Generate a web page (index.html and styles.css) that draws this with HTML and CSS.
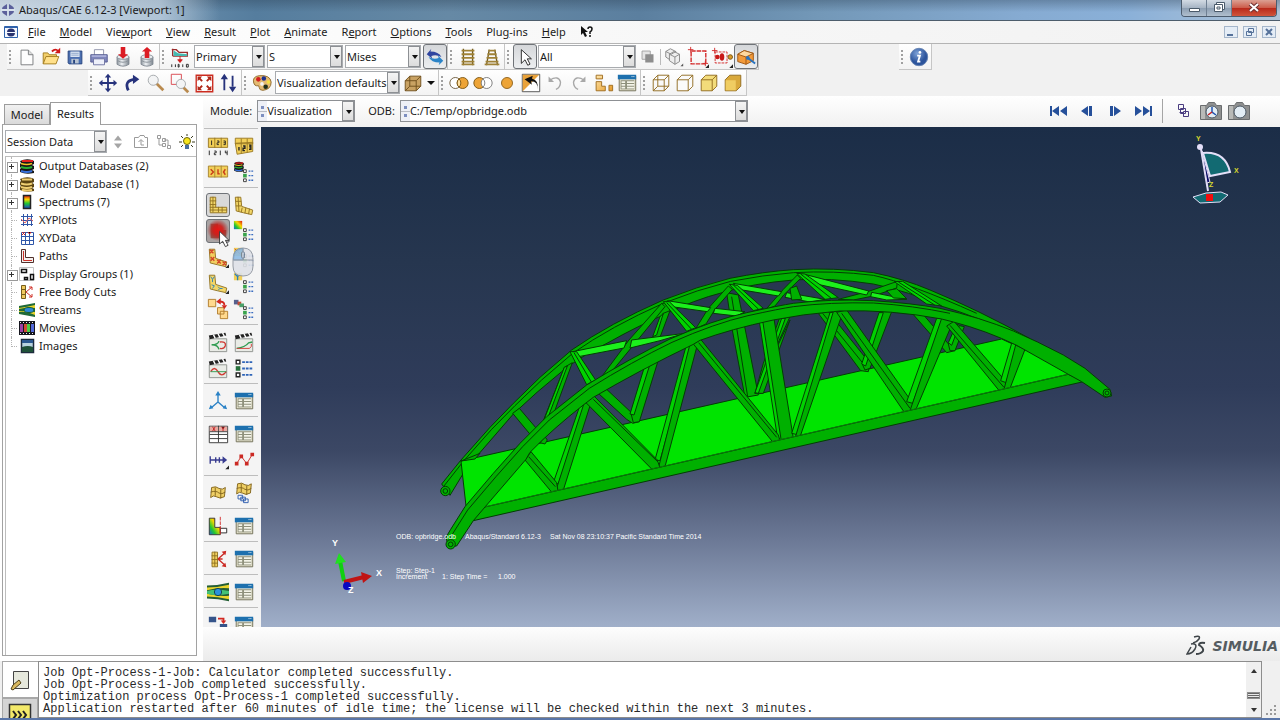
FILE: index.html
```html
<!DOCTYPE html>
<html lang="en">
<head>
<meta charset="utf-8">
<title>Abaqus/CAE 6.12-3 [Viewport: 1]</title>
<link rel="stylesheet" href="styles.css">
</head>
<body>
<svg class="sprite" aria-hidden="true">
  <defs>
    <linearGradient id="rainbow" x1="0" y1="0" x2="0" y2="1"><stop offset="0" stop-color="#e01010"/><stop offset=".3" stop-color="#f8d800"/><stop offset=".6" stop-color="#20c830"/><stop offset="1" stop-color="#1840d0"/></linearGradient>
    <linearGradient id="rainbowx" x1="1" y1="0" x2="0" y2="1"><stop offset="0" stop-color="#e01010"/><stop offset=".4" stop-color="#f8d800"/><stop offset=".7" stop-color="#20c830"/><stop offset="1" stop-color="#1860e0"/></linearGradient>
    <linearGradient id="gold" x1="0" y1="0" x2="1" y2="1"><stop offset="0" stop-color="#ffe7ae"/><stop offset="1" stop-color="#e59a28"/></linearGradient>
    <radialGradient id="hot"><stop offset="0" stop-color="#e81414"/><stop offset=".45" stop-color="#d01c18" stop-opacity=".9"/><stop offset="1" stop-color="#a02020" stop-opacity="0"/></radialGradient>
    <radialGradient id="infog" cx=".4" cy=".3"><stop offset="0" stop-color="#7fa3d8"/><stop offset="1" stop-color="#2c549c"/></radialGradient>
    <linearGradient id="steel" x1="0" x2="1"><stop offset="0" stop-color="#8c959d"/><stop offset=".4" stop-color="#eef1f4"/><stop offset="1" stop-color="#7c858e"/></linearGradient>
  </defs>
  <symbol id="new" viewBox="0 0 24 24"><path d="M5.500 4.500h8l5 5v11h-13z" fill="#fdfdfd" stroke="#77797c"/><path d="M13.500 4.500v5h5" fill="#ddd" stroke="#77797c"/></symbol>
  <symbol id="open" viewBox="0 0 24 24"><path d="M3.500 19.500V7.500h5l1.500 2h8v4" fill="#f2cf6a" stroke="#a17a1c"/><path d="M3.500 19.500l3-8h14l-3 8z" fill="#ffe08a" stroke="#a17a1c"/><path d="M13 6q4-4 7 0" fill="none" stroke="#d01818" stroke-width="2"/><path d="M22 2v6h-6z" fill="#d01818"/></symbol>
  <symbol id="save" viewBox="0 0 24 24"><path d="M4.500 5.500h15v14h-14l-1-1z" fill="#4b6fb0" stroke="#26447e"/><path d="M7 6h10v6H7z" fill="#d9e4f2"/><path d="M8 8h8M8 10h8" stroke="#8fa6c9"/><path d="M8 14h8v5H8z" fill="#b9c4d2"/><path d="M10 15h2v4h-2z" fill="#26447e"/></symbol>
  <symbol id="print" viewBox="0 0 24 24"><path d="M7 4h10v6H7z" fill="#fff" stroke="#8d91a8"/><path d="M3 9.500h18v8H3z" fill="#7f86bd" stroke="#545b92"/><path d="M4 10h16v2H4z" fill="#a9aed8"/><path d="M6 14h12v6.500H6z" fill="#eef0fa" stroke="#6d73a2"/></symbol>
  <symbol id="drum" viewBox="0 0 24 24"><path d="M5.500 12v8q6.500 4 13 0v-8z" fill="url(#steel)" stroke="#7f8790"/><ellipse cx="12" cy="12" rx="6.500" ry="2.500" fill="#e8ebee" stroke="#8a9299"/><path d="M6 16q6 3.500 12 0" fill="none" stroke="#8a9299"/></symbol>
  <symbol id="dbdown" viewBox="0 0 24 24"><use href="#drum"/><path d="M9.500 1h5v8h3L12 14 6.500 9h3z" fill="#dc1c24"/></symbol>
  <symbol id="dbup" viewBox="0 0 24 24"><use href="#drum"/><path d="M9.500 13h5V6h3L12 1 6.500 6h3z" fill="#dc1c24"/></symbol>
  <symbol id="field" viewBox="0 0 24 24"><path d="M4 3v8M3 4h5l3 3h9v4H4" fill="none" stroke="#9b2c2c" stroke-width="1.500"/><path d="M5 5l5 3 10 1v2H5z" fill="#46b9b0"/><path d="M12 11v6M9.500 15l2.500 3 2.500-3z" stroke="#d01c1c" fill="#d01c1c"/><path d="M3 20v3M7 20v3M15 20v3M11 20v3h-1v-3zM19 20v3h2v-3z" stroke="#222" fill="none"/></symbol>
  <symbol id="sync" viewBox="0 0 24 24"><path d="M8 3l-1 3q9 0 12 6-6-3-11-1l1 3-6-5z" fill="#2f45a0"/><path d="M16 21l1-3q-9 0-12-6 6 3 11 1l-1-3 6 6z" fill="#2b84c8"/></symbol>
  <symbol id="ladder" viewBox="0 0 24 24"><path d="M7 3v18M17 3v18" stroke="#6f5a20" stroke-width="1.500"/><path d="M5 5h14M5 9h14M5 13h14M5 17h14M5 20h14" stroke="#a08236" stroke-width="2"/></symbol>
  <symbol id="persp" viewBox="0 0 24 24"><path d="M9 4L6 21M15 4l3 17" stroke="#6f5a20" stroke-width="1.500"/><path d="M8 5h8M7 9h10M6 13h12M5 17h14M4 20h16" stroke="#a08236" stroke-width="2"/></symbol>
  <symbol id="arrow" viewBox="0 0 24 24"><path d="M8 4v15l4-4 3 6 2.500-1.200-3-5.800H19z" fill="#fff" stroke="#222"/></symbol>
  <symbol id="overlap" viewBox="0 0 24 24"><path d="M5.500 5.500h9v9h-9z" fill="#e4e4e4" stroke="#a0a0a0"/><path d="M9 9h9v9H9z" fill="#8d8d8d"/></symbol>
  <symbol id="boxes" viewBox="0 0 24 24"><g fill="#eee" stroke="#858585"><path d="M3 6l5-3 6 3v7l-5 3-6-4z"/><path d="M7 9l5-3 6 3v8l-5 3-6-4z"/><path d="M7 9l6 3 5-3M13 12v8M3 6l6 3 5-3" fill="none"/></g><path d="M22 19v3h-3z" fill="#555"/></symbol>
  <symbol id="rect" viewBox="0 0 24 24"><path d="M4.500 5.500h16v14h-16z" fill="none" stroke="#d32a2a" stroke-width="1.500" stroke-dasharray="5 1"/><path d="M1 4h6M4 1v6M17 19h6M20 16v6" stroke="#d32a2a"/><path d="M24 20v4h-4z" fill="#222"/></symbol>
  <symbol id="nodes" viewBox="0 0 24 24"><path d="M4.500 6.500h13v12h-13z" fill="none" stroke="#d32a2a" stroke-dasharray="3 1"/><path d="M1 5h6M4 2v6" stroke="#d32a2a"/><circle cx="7" cy="12" r="2.500" fill="#c81818"/><ellipse cx="12" cy="12" rx="2.500" ry="4" fill="#c81818"/><circle cx="21" cy="12" r="2.500" fill="#d99a28" stroke="#7a5412"/><path d="M24 20v4h-4z" fill="#222"/></symbol>
  <symbol id="orangebox" viewBox="0 0 24 24"><path d="M3 9l7-4 10 3v8l-8 4-9-3z" fill="#f29a3a" stroke="#9c5410"/><path d="M3 9l9 3 8-4-10-3z" fill="#ffd9a0" stroke="#9c5410"/><path d="M12 12v8" stroke="#9c5410"/><path d="M14 13l8 6" stroke="#2672c0" stroke-width="2"/><circle cx="14" cy="13" r="2" fill="#2672c0"/></symbol>
  <symbol id="move" viewBox="0 0 24 24"><path d="M12 5v14M5 12h14" stroke="#27337c" stroke-width="2"/><path d="M12 2l3.500 4h-7zM12 22l3.500-4h-7zM2 12l4-3.500v7zM22 12l-4-3.500v7z" fill="#27337c"/></symbol>
  <symbol id="rotate" viewBox="0 0 24 24"><path d="M8 20Q3 10 14 8" fill="none" stroke="#27337c" stroke-width="3"/><path d="M13 3l7 5-7 5z" fill="#27337c"/></symbol>
  <symbol id="zoom" viewBox="0 0 24 24"><path d="M12 12l8 8" stroke="#b98a4e" stroke-width="3"/><circle cx="9" cy="9" r="5.500" fill="#f3f4f5" stroke="#a2a6aa"/></symbol>
  <symbol id="zoombox" viewBox="0 0 24 24"><path d="M2.500 2.500h11v11h-11z" fill="none" stroke="#d8434a"/><path d="M15 16l6 6" stroke="#b98a4e" stroke-width="3"/><circle cx="13" cy="13" r="5" fill="#f3f4f5" stroke="#a2a6aa"/></symbol>
  <symbol id="fit" viewBox="0 0 24 24"><path d="M3.500 3.500h18v18h-18z" fill="#fff" stroke="#cc2c20" stroke-width="1.500"/><path d="M5 5h5L5 10zM20 5v5l-5-5zM5 20v-5l5 5zM20 20h-5l5-5z" fill="#b02818"/><path d="M6 6l4 4M19 6l-4 4M6 19l4-4M19 19l-4-4" stroke="#b02818" stroke-width="2"/></symbol>
  <symbol id="updown" viewBox="0 0 24 24"><path d="M8 7v13M17 4v12" stroke="#27337c" stroke-width="2"/><path d="M8 2l4 6H4zM17 22l4-6h-8z" fill="#27337c"/></symbol>
  <symbol id="palette" viewBox="0 0 24 24"><path d="M3 12Q1 5 9 4q12-1 13 7 0 8-9 9-4 0-4-3t-3-2q-2 0-3-3z" fill="#e4ba72" stroke="#8c6626"/><circle cx="8" cy="8" r="2.500" fill="#d42020"/><circle cx="14" cy="7" r="2.500" fill="#1c2f90"/><circle cx="19" cy="11" r="2" fill="#f5e040"/><circle cx="12" cy="13" r="2" fill="#f3f3f3"/><circle cx="16" cy="16" r="2.500" fill="#20301c"/></symbol>
  <symbol id="cube" viewBox="0 0 24 24"><path d="M3.500 9.500l5-5h12v11l-5 5h-12z" fill="#c9a263" stroke="#6f4e1b"/><path d="M3.500 9.500h12v11M15.500 9.500l5-5M8.500 4.500v11h12M3.500 20.500l5-5" fill="none" stroke="#6f4e1b"/></symbol>
  <symbol id="venn" viewBox="0 0 24 24"><circle cx="8" cy="12" r="6" fill="#fff" stroke="#6b5a3c"/><circle cx="16" cy="12" r="6" fill="#eda437" stroke="#7a5412"/><path d="M12 7.500a6 6 0 010 9 6 6 0 010-9z" fill="#ffe0a0" stroke="#7a5412"/></symbol>
  <symbol id="venn2" viewBox="0 0 24 24"><circle cx="8" cy="12" r="6" fill="#eda437" stroke="#7a5412"/><circle cx="16" cy="12" r="6" fill="#fff" stroke="#777"/><path d="M12 7.500a6 6 0 010 9" fill="none" stroke="#777"/></symbol>
  <symbol id="ball" viewBox="0 0 24 24"><circle cx="12" cy="12" r="6" fill="#eda437" stroke="#8d601a"/></symbol>
  <symbol id="replace" viewBox="0 0 24 24"><path d="M2.500 2.500h19v19h-19z" fill="#fff" stroke="#4d4d4d"/><path d="M3 3h18L3 21z" fill="#e9a23a"/><path d="M19 19q1-9-7-9l1 4L5 8l9-4-1 3q8 2 6 12z" fill="#111"/></symbol>
  <symbol id="undo" viewBox="0 0 24 24"><path d="M6 9q10-6 12 2 0 6-5 8" fill="none" stroke="#a8a8a8" stroke-width="1.500"/><path d="M5 5v6h6z" fill="#a8a8a8"/></symbol>
  <symbol id="redo" viewBox="0 0 24 24"><path d="M18 9Q8 3 6 11q0 6 5 8" fill="none" stroke="#a8a8a8" stroke-width="1.500"/><path d="M19 5v6h-6z" fill="#a8a8a8"/></symbol>
  <symbol id="parts" viewBox="0 0 24 24"><g fill="url(#gold)" stroke="#9c6a1c"><path d="M4.500 3.500h7v4h-7zM4.500 10.500h6v5h4v5h-10zM18.500 14.500h4v6h-4z"/></g></symbol>
  <symbol id="dialog" viewBox="0 0 24 24"><path d="M3.500 4.500h18v16h-18z" fill="#f0ecd8" stroke="#6b6a52"/><path d="M2 3h20v5H2z" fill="#1d70ae"/><path d="M17 5h1M19 5h1" stroke="#fff"/><path d="M5 9h15v10H5z" fill="#8f917c"/><path d="M6 11h4M12 11h8M6 14h4M12 14h8M6 17h4M12 17h8" stroke="#f4f4e8" stroke-width="2"/></symbol>
  <symbol id="wire" viewBox="0 0 24 24"><g fill="none" stroke="#8f6a1e"><path d="M3.500 8.500h12v12h-12zM8.500 3.500h12v12h-12zM3.500 8.500l5-5M15.500 8.500l5-5M15.500 20.500l5-5M3.500 20.500l5-5"/></g></symbol>
  <symbol id="hidden" viewBox="0 0 24 24"><path d="M3.500 8.500l5-5h12v12l-5 5h-12zM3.500 8.500h12v12M15.500 8.500l5-5" fill="#fafafa" stroke="#8f6a1e"/></symbol>
  <symbol id="yellowcube" viewBox="0 0 24 24"><path d="M3.500 8.500l5-5h12v12l-5 5h-12zM3.500 8.500h12v12M15.500 8.500l5-5" fill="#f3dc7a" stroke="#8f6a1e"/></symbol>
  <symbol id="goldcube" viewBox="0 0 24 24"><path d="M3.500 8.500l5-5h12v12l-5 5h-12z" fill="#d9a93c" stroke="#8f6a1e"/><path d="M4 9h11v11H4z" fill="#f0cd62"/></symbol>
  <symbol id="info" viewBox="0 0 24 24"><circle cx="12" cy="12" r="9.500" fill="url(#infog)" stroke="#6280b0"/><circle cx="13" cy="7" r="1.500" fill="#fff"/><path d="M10 10.500h3l-2 6.500h2.500" fill="none" stroke="#fff" stroke-width="2"/></symbol>
  <symbol id="first" viewBox="0 0 24 24"><path d="M4 7v10" stroke="#26509a" stroke-width="2"/><path d="M12 7v10l-7-5zM20 7v10l-7-5z" fill="#26509a"/></symbol>
  <symbol id="prev" viewBox="0 0 24 24"><path d="M13 7v10l-7-5zM14 7h3v10h-3z" fill="#26509a"/></symbol>
  <symbol id="next" viewBox="0 0 24 24"><path d="M11 7v10l7-5zM7 7h3v10H7z" fill="#26509a"/></symbol>
  <symbol id="last" viewBox="0 0 24 24"><path d="M20 7v10" stroke="#26509a" stroke-width="2"/><path d="M12 7v10l7-5zM4 7v10l7-5z" fill="#26509a"/></symbol>
  <symbol id="frames" viewBox="0 0 24 24"><g fill="none" stroke="#4a3c80"><path d="M7.500 5.500h5v5h-5zM9.500 9.500h5v5h-5zM12.500 12.500h5v5h-5zM8.500 13.500h4v4"/></g></symbol>
  <symbol id="camera" viewBox="0 0 24 24"><path d="M1.500 6.500h6l2-3h6l2 3h5v14h-21z" fill="#8f9090" stroke="#6a6d6f"/><path d="M2 7h4v13H2z" fill="#b9bab8"/><circle cx="13" cy="13" r="6" fill="#e3edf5" stroke="#4a5764"/></symbol>
  <symbol id="cameraaxis" viewBox="0 0 24 24"><use href="#camera"/><path d="M13 8v5l4 3" fill="none" stroke="#2354b0" stroke-width="1.500"/><path d="M13 13l-4 3" stroke="#c82020" stroke-width="1.500"/></symbol>
  <symbol id="stackdb" viewBox="0 0 16 16"><path d="M1 3q6-3 12-1l2 1v3L13 7l2 1v3l-2 1 2 1v2q-8 2-14-1V11l1-1-1-1V6l1-1z" fill="#171717"/><path d="M3 3h11" stroke="#e02020" stroke-width="2"/><path d="M2 5.500q6 2 11 0" stroke="#f0c020" fill="none" stroke-width="1.500"/><path d="M2 9q6 2 11 0" stroke="#27b035" fill="none" stroke-width="2"/><path d="M2 13q6 2 11 0" stroke="#3770dc" fill="none" stroke-width="2"/></symbol>
  <symbol id="stackmdb" viewBox="0 0 16 16"><path d="M1 3q6-3 12-1l2 1v3L13 7l2 1v3l-2 1 2 1v2q-8 2-14-1V11l1-1-1-1V6l1-1z" fill="#5c4512"/><path d="M3 3.500h10M2 7.500q6 2 11 0M2 11q6 2 11 0M3 14q5 1 10 0" stroke="#f0cf72" fill="none" stroke-width="2"/></symbol>
  <symbol id="spectrum" viewBox="0 0 16 16"><path d="M4.500 1.500h7v13h-7z" fill="url(#rainbow)" stroke="#222" stroke-width="1.500"/></symbol>
  <symbol id="xyplot" viewBox="0 0 16 16"><path d="M2 4.500h12M2 8.500h12M2 12.500h12M4.500 2v12M8.500 2v12M12.500 2v12" stroke="#2f56a8"/><path d="M2 7l4 4 4-5 4 3" stroke="#e06060" fill="none"/></symbol>
  <symbol id="xydata" viewBox="0 0 16 16"><path d="M2.500 2.500h12v12h-12zM2.500 6.500h12M2.500 10.500h12M6.500 2v12M10.500 2v12" stroke="#2f56a8" fill="#fff"/><path d="M3 2l3 3M6 2L3 5M9 2l1.500 2L12 2" stroke="#d02020"/></symbol>
  <symbol id="pathi" viewBox="0 0 16 16"><path d="M2.500 1.500h4v8h8v5h-12z" fill="#f3f0ee" stroke="#50302c"/><path d="M4.500 3v9.500H13" stroke="#cc3028" fill="none"/></symbol>
  <symbol id="groups" viewBox="0 0 16 16"><path d="M.500 1.500h14v13H.500z" fill="#fff" stroke="#c3c3c3"/><path d="M2.500 3.500h5v3h-5zM11.500 8.500h3v5h-3zM5.500 11.500h3v2h-3z" fill="#fff" stroke="#111" stroke-width="1.500"/></symbol>
  <symbol id="fbc" viewBox="0 0 16 16"><path d="M2.500 1.500h4v13h-4zM2 5.500h5M2 10.500h5" fill="#efca5d" stroke="#785d1a"/><path d="M7 8l6-5M7 8l6 5M13 6V3h-3M13 10v3h-3" stroke="#d03028" fill="none"/></symbol>
  <symbol id="streams" viewBox="0 0 16 16"><path d="M0 4l16-3v14L0 12z" fill="#1f6a38"/><path d="M0 6q8-1 16-3v3Q8 5 0 7zM0 10q8-1 16 3v-3q-8-1-16-1z" fill="#e8d32c"/><ellipse cx="10" cy="8" rx="5" ry="2.500" fill="#2b87d8" stroke="#145e34"/></symbol>
  <symbol id="movie" viewBox="0 0 16 16"><path d="M0 1h16v14H0z" fill="#15151d"/><path d="M1 4h3v8H1z" fill="#9b3fa4"/><path d="M5 4h6v8H5z" fill="#d14a35"/><path d="M8 4h3v8H8z" fill="#4ccc45"/><path d="M12 4h3v8h-3z" fill="#5268d8"/><path d="M1 2.500h14M1 13.500h14" stroke="#eee" stroke-dasharray="1 2"/></symbol>
  <symbol id="image" viewBox="0 0 16 16"><path d="M2.500 1.500h12v13h-12z" fill="#b9d3df" stroke="#1d2b3d" stroke-width="1.500"/><path d="M3 2h11v3H3z" fill="#2b5890"/><path d="M3 9q6-2 11 0v5H3z" fill="#1f5138"/></symbol>
  <symbol id="sorter" viewBox="0 0 16 20"><path d="M8 2l5 6H3zM8 18l5-6H3z" fill="#a5a5a5"/></symbol>
  <symbol id="upfolder" viewBox="0 0 16 16"><path d="M1.500 13.500v-10h4l1.500-2h4l1 2h2.500v10z" fill="#fff" stroke="#9a9a9a"/><path d="M8 6v5h3M5.500 8L8 5.500 10.500 8" stroke="#9a9a9a" fill="none"/></symbol>
  <symbol id="treei" viewBox="0 0 16 16"><path d="M1.500 1.500h3v3h-3zM6.500 4.500h3v3h-3zM6.500 9.500h3v3h-3zM11.500 11.500h3v3h-3zM3 5v6h3M8 6h4v5" stroke="#9a9a9a" fill="#fff"/></symbol>
  <symbol id="bulb" viewBox="0 0 16 16"><path d="M8 0v2M2 2l2 2M14 2l-2 2M0 8h3M16 8h-3M2 13l2-2M14 13l-2-2" stroke="#3a3a20"/><circle cx="8" cy="7" r="3.500" fill="#f8e61d" stroke="#6a640c"/><path d="M6 11h4v4H6z" fill="#4a6fa0"/></symbol>
  <symbol id="num" viewBox="0 0 24 24"><path d="M1.500 3.500h21v10h-21zM8.500 3v11M15.500 3v11" fill="#f2cf58" stroke="#987823"/><path d="M5 6v5M11 6.500h2v2h-2v2h2M18 6.500h2v4h-2M18 8.500h2" stroke="#222" fill="none"/><path d="M2.500 17v5M8 17.500h2v2H8v2h2M14.500 17v5M20 17v2.500h2M22 17v5" stroke="#222" fill="none"/></symbol>
  <symbol id="num2" viewBox="0 0 24 24"><path d="M2.500 3.500h19v6h-19zM2.500 9l19-1v10l-17 3zM9 4v16M15.500 4v15" fill="#f2cf58" stroke="#987823"/><path d="M6.500 13v4M11 12h2v2.500h-2V17h2M17.500 11h2v4.500h-2M17.500 13h2" stroke="#222" fill="none" stroke-width="1.500"/></symbol>
  <symbol id="ident" viewBox="0 0 24 24"><path d="M1.500 5.500h21v12h-21zM8.500 5v13M15.500 5v13" fill="#f2cf58" stroke="#a68430"/><path d="M4 9l3 3-3 3M12 9v5h2M20 9l-2 3 2 3" stroke="#c83a18" fill="none" stroke-width="1.500"/></symbol>
  <symbol id="opts" viewBox="0 0 24 24"><g fill="#fff" stroke="#333"><path d="M11.500 9.500h3v3h-3zM11.500 19.500h3v3h-3z"/></g><path d="M11 14h4v4h-4z" fill="#39a34c"/><path d="M17 11h6M17 16h6M17 21h6" stroke="#3a6cc0" stroke-width="1.500" stroke-dasharray="2 1"/></symbol>
  <symbol id="dbopt" viewBox="0 0 24 24"><use href="#stackdb" x="0" y="0" width="13" height="12"/><use href="#opts"/></symbol>
  <symbol id="lshape" viewBox="0 0 24 24"><path d="M3.500 3.500h6v11h12v6h-18zM6.500 3v17M3 7.500h7M3 11.500h7M3 14.500h7M10 17.500h12M3 17.500h7M12.500 14v6M16.500 14v6" fill="#f2d668" stroke="#907120"/></symbol>
  <symbol id="ldef" viewBox="0 0 24 24"><path d="M2.500 3.500h6l1 10 12 4-1 5-9-2-8-2zM5.500 3l1 16M3 8h6M3 13h6M10 15l-1 5M14 15l-1 6M18 16l-1 6" fill="#f2d668" stroke="#907120"/></symbol>
  <symbol id="hotl" viewBox="0 0 24 24"><path d="M4 4h8v7h9v9H4z" fill="#8a3a2a" opacity=".7"/><circle cx="12" cy="11" r="12" fill="url(#hot)"/></symbol>
  <symbol id="contopt" viewBox="0 0 24 24"><path d="M1 1h9v9H1z" fill="url(#rainbowx)"/><use href="#opts"/></symbol>
  <symbol id="symopt" viewBox="0 0 24 24"><path d="M1 2h9v9H1z" fill="#f2cf58"/><path d="M2 3l6 6M8 3L2 9" stroke="#d04428"/><use href="#opts"/></symbol>
  <symbol id="lsym" viewBox="0 0 24 24"><path d="M2.500 3.500h6l1 10 12 4-1 5-9-2-8-2z" fill="#f2cf60" stroke="#907120"/><path d="M3 4l4 4M7 4L3 8M4 12l4 4M8 12l-4 4M11 15l4 4M15 15l-4 4M17 17l4 4M21 17l-4 4" stroke="#d24528" stroke-width="1.500"/><path d="M24 20v4h-4z" fill="#222"/></symbol>
  <symbol id="lmat" viewBox="0 0 24 24"><path d="M2.500 3.500h6l1 10 12 4-1 5-9-2-8-2z" fill="#f2d668" stroke="#907120"/><path d="M4 5l2 3 2-3M6 8v3M5 14l3 1-2 3M12 16l2 2-2 2M14 18h3" stroke="#2b80b8" fill="none"/><path d="M24 20v4h-4z" fill="#222"/></symbol>
  <symbol id="matopt" viewBox="0 0 24 24"><path d="M1 1h9v8H1z" fill="#f2cf58"/><path d="M2 2l3 3 3-3M5 5v4" stroke="#2b80b8" fill="none" stroke-width="1.500"/><use href="#opts"/></symbol>
  <symbol id="super" viewBox="0 0 24 24"><path d="M1.500 1.500h8v8h-8zM11.500 10.500h7v7h-7zM14.500 14.500h8v8h-8z" fill="#ffd98e" stroke="#b07b2b"/><path d="M12 4q7-1 7 4" stroke="#d22820" fill="none" stroke-width="2"/><path d="M10 4l5-4v7zM19 12l-3-4h6z" fill="#d22820"/></symbol>
  <symbol id="superopt" viewBox="0 0 24 24"><path d="M1 2h5v5H1z" fill="#56608c"/><path d="M5 4h4v4H5z" fill="#c44a36"/><path d="M7 6h5v4H7z" fill="#4aa06a"/><use href="#opts"/></symbol>
  <symbol id="clap" viewBox="0 0 24 24"><path d="M2.500 8.500h19v14h-19z" fill="#e9ebe6" stroke="#8b8f8b"/><path d="M2 5l18-3 1 3-18 4z" fill="#222"/><path d="M7 4l2 4M12 3l2 4M17 2l2 4" stroke="#fff" stroke-width="1.500"/></symbol>
  <symbol id="anim1" viewBox="0 0 24 24"><use href="#clap"/><path d="M5 15q7 0 8-4M5 15q7 0 8 5" stroke="#2f9c50" fill="none" stroke-width="1.500"/><path d="M14 12q7-1 6 4-1 4-6 3" stroke="#d03a34" fill="none" stroke-width="1.500"/></symbol>
  <symbol id="anim2" viewBox="0 0 24 24"><use href="#clap"/><path d="M4 19q9-1 13-6l4-1" stroke="#2f9c50" fill="none" stroke-width="1.500"/><path d="M4 19h14q3-2 2-5" stroke="#d03a34" fill="none"/></symbol>
  <symbol id="anim3" viewBox="0 0 24 24"><use href="#clap"/><path d="M4 16q4-7 8 0t9 0" stroke="#d03a34" fill="none" stroke-width="1.500"/><path d="M4 16h17" stroke="#2f9c50"/></symbol>
  <symbol id="listopt" viewBox="0 0 24 24"><path d="M3.500 3.500h4v4h-4zM3.500 17.500h4v4h-4z" fill="#fff" stroke="#222" stroke-width="1.500"/><path d="M3 10h5v5H3z" fill="#27713c"/><path d="M10 5.500h12M10 12.500h12M10 19.500h12" stroke="#2e64b8" stroke-width="2" stroke-dasharray="3 1"/></symbol>
  <symbol id="csys" viewBox="0 0 24 24"><path d="M12 4v9l-7 6M12 13l7 6" stroke="#2a82c6" stroke-width="1.500" fill="none"/><path d="M12 1l3 5H9zM2 21l2-5 3 4zM22 21l-2-5-3 4z" fill="#2a82c6"/></symbol>
  <symbol id="xytable" viewBox="0 0 24 24"><path d="M2.500 3.500h20v18h-20zM12.500 3v18M3 12.500h19M3 17h19" fill="#fff" stroke="#333"/><path d="M3 4h9v5H3zM13 4h9v5h-9z" fill="#e8a8a0"/><path d="M6 4l3 5M9 4L6 9M16 4l1.500 2.500L19 4M17.500 6.500V9" stroke="#c02020"/><path d="M3 9.500h19" stroke="#333"/></symbol>
  <symbol id="pathpt" viewBox="0 0 24 24"><path d="M3 12h16M3.500 8v8M9.500 9v6M13.500 9v6" stroke="#383c90" stroke-width="1.500"/><path d="M22 12l-5-4v8z" fill="#383c90"/><path d="M24 18v4h-4z" fill="#222"/></symbol>
  <symbol id="xyline" viewBox="0 0 24 24"><path d="M4 16l5-8 6 8 6-10" stroke="#cb2a24" fill="none"/><path d="M2 14h4v4H2zM7 6h4v4H7zM13 14h4v4h-4zM19 4h4v4h-4z" fill="#cb2a24"/></symbol>
  <symbol id="waves" viewBox="0 0 24 24"><path d="M5 6q5-2 8 1 4 2 7-1l-1 10q-5 3-9 0-3-2-6 1z" fill="#efcf65" stroke="#80631b"/><path d="M4 11q6-2 9 1 3 2 7-1M9 6v9M15 8v10" fill="none" stroke="#80631b"/></symbol>
  <symbol id="waves2" viewBox="0 0 24 24"><use href="#waves" y="-4"/><path d="M5.500 14.500h5v4h-5zM8.500 16.500h5v4h-5zM11.500 18.500h5v4h-5z" fill="none" stroke="#2d5cae"/></symbol>
  <symbol id="viewcut" viewBox="0 0 24 24"><path d="M2.500 3.500h6v10h6v8h-12z" fill="url(#rainbowx)" stroke="#333"/><path d="M14.500 14.500h7v5h-7z" fill="#fff" stroke="#222"/><path d="M14.500 2v20" stroke="#d02a2a" stroke-dasharray="4 1"/></symbol>
  <symbol id="fbc2" viewBox="0 0 24 24"><path d="M5.500 4.500h6v16h-6zM8.500 4v16M5 8.500h7M5 12.500h7M5 16.500h7" fill="#f2d060" stroke="#8d701f"/><path d="M12 12l8-7M12 12l8 7M12 12h5" stroke="#cb2a24" stroke-width="1.500"/><path d="M21 3l-1 5-4-4zM21 21l-5-1 4-4z" fill="#cb2a24"/></symbol>
  <symbol id="stream2" viewBox="0 0 24 24"><path d="M0 5q12 0 24-3v20Q12 19 0 19z" fill="#245e34"/><path d="M0 7q12 0 24-3v4Q12 7 0 10zM0 17q12 0 24 3v-4q-12 1-24-2z" fill="#ead52c"/><path d="M0 11q10-3 24 0v3q-14 3-24 0z" fill="#43c276"/><circle cx="12" cy="12" r="4" fill="#2a92dc" stroke="#173f48"/></symbol>
  <symbol id="swap" viewBox="0 0 24 24"><path d="M2 3h8v6H2zM14 11h8v6h-8z" fill="#35548a"/><path d="M12 5h6v3" stroke="#d22820" fill="none" stroke-width="2"/><path d="M18 11l-3-4h6z" fill="#d22820"/></symbol>
</svg>

<div class="app">
  <header class="titlebar">
    <svg class="appicon" viewBox="0 0 16 16"><path d="M7 2v5H2q0-2 2-3zM9 2v5h5q0-2-2-3zM7 14V9H2q0 2 2 3zM9 14V9h5q0 2-2 3z" fill="#5b609b"/><path d="M1 8h14" stroke="#e8edf4"/></svg>
    <h1>Abaqus/CAE 6.12-3 [Viewport: 1]</h1>
    <div class="wincontrols">
      <button aria-label="Minimize"><svg viewBox="0 0 24 16"><path d="M7.500 8.500h10v3h-10z" fill="#fff" stroke="#4a5a6a"/></svg></button>
      <button aria-label="Restore"><svg viewBox="0 0 24 16"><path d="M9.500 2.500h8v7h-8z" fill="#fff" stroke="#4a5a6a"/><path d="M7.500 4.500h8v7h-8zM10 7h3v2h-3z" fill="#fff" stroke="#4a5a6a"/></svg></button>
      <button class="close" aria-label="Close"><svg viewBox="0 0 24 16"><path d="M8 4l8 7M16 4l-8 7" stroke="#6c3030" stroke-width="4"/><path d="M8 4l8 7M16 4l-8 7" stroke="#fff" stroke-width="2"/></svg></button>
    </div>
  </header>

  <nav class="menubar">
    <svg class="docicon" viewBox="0 0 14 14"><path d="M.500 1.500h13v11H.500z" fill="#f4f8ff" stroke="#2f62ac"/><path d="M1 2h12v1H1z" fill="#2f62ac"/><circle cx="7" cy="7.500" r="4" fill="#2a3370"/><path d="M2 7.500h10" stroke="#f4f8ff"/></svg>
    <button><u>F</u>ile</button><button><u>M</u>odel</button><button>Vie<u>w</u>port</button><button><u>V</u>iew</button><button><u>R</u>esult</button><button><u>P</u>lot</button><button><u>A</u>nimate</button><button>R<u>e</u>port</button><button><u>O</u>ptions</button><button><u>T</u>ools</button><button>Plu<u>g</u>-ins</button><button><u>H</u>elp</button>
    <button aria-label="Context help"><svg class="helpicon" viewBox="0 0 14 14"><path d="M1 1v9l2-2 2 4 2-1-2-4h3z" fill="#111"/><path d="M8 4q0-2 2-2t2 2-2 3v2M10 10v2" fill="none" stroke="#111" stroke-width="1.500"/></svg></button>
    <div class="mdi">
      <button aria-label="Minimize viewport"><svg viewBox="0 0 12 10"><path d="M2 8h6" stroke="#56729a" stroke-width="2"/></svg></button>
      <button aria-label="Restore viewport"><svg viewBox="0 0 12 10"><path d="M4.500 1.500h5v4h-5zM2.500 4.500h5v4h-5z" fill="#e5edf6" stroke="#56729a"/></svg></button>
      <button aria-label="Close viewport"><svg viewBox="0 0 12 10"><path d="M3 2l6 6M9 2L3 8" stroke="#56729a" stroke-width="2"/></svg></button>
    </div>
  </nav>

  <div class="toolbars">
    <div class="row">
      <div class="group"><i class="grip"></i>
        <button aria-label="New"><svg><use href="#new"/></svg></button><button aria-label="Open"><svg><use href="#open"/></svg></button><button aria-label="Save"><svg><use href="#save"/></svg></button><button aria-label="Print"><svg><use href="#print"/></svg></button><button aria-label="Import"><svg><use href="#dbdown"/></svg></button><button aria-label="Export"><svg><use href="#dbup"/></svg></button>
      </div>
      <div class="group spaced"><i class="grip"></i>
        <button aria-label="Field output"><svg><use href="#field"/></svg></button>
        <span class="combo w-s"><select aria-label="Variable type"><option>Primary</option></select></span>
        <span class="combo w-m"><select aria-label="Variable"><option>S</option></select></span>
        <span class="combo w-m"><select aria-label="Invariant"><option>Mises</option></select></span>
        <button class="on" aria-label="Sync plot state"><svg><use href="#sync"/></svg></button>
      </div>
      <div class="group"><i class="grip"></i>
        <button aria-label="Parallel"><svg><use href="#ladder"/></svg></button><button aria-label="Perspective"><svg><use href="#persp"/></svg></button>
      </div>
      <div class="group"><i class="grip"></i>
        <button class="on" aria-label="Select"><svg><use href="#arrow"/></svg></button>
        <span class="combo w-l"><select aria-label="Selection filter"><option>All</option></select></span>
        <button aria-label="Highlight"><svg><use href="#overlap"/></svg></button><i class="bar"></i><button aria-label="Drag shape"><svg><use href="#boxes"/></svg></button><button aria-label="Rectangle"><svg><use href="#rect"/></svg></button><button aria-label="Inside"><svg><use href="#nodes"/></svg></button><button class="on" aria-label="Exterior"><svg><use href="#orangebox"/></svg></button>
      </div>
      <div class="group apart"><i class="grip"></i>
        <button aria-label="Query"><svg><use href="#info"/></svg></button>
      </div>
    </div>
    <div class="row second">
      <div class="group"><i class="grip"></i>
        <button aria-label="Pan"><svg><use href="#move"/></svg></button><button aria-label="Rotate"><svg><use href="#rotate"/></svg></button><button aria-label="Magnify"><svg><use href="#zoom"/></svg></button><button aria-label="Box zoom"><svg><use href="#zoombox"/></svg></button><button aria-label="Auto-fit"><svg><use href="#fit"/></svg></button><button aria-label="Cycle views"><svg><use href="#updown"/></svg></button>
      </div>
      <div class="group"><i class="grip"></i>
        <button aria-label="Color code"><svg><use href="#palette"/></svg></button>
        <span class="combo w-xl"><select aria-label="Color mapping"><option>Visualization defaults</option></select></span>
        <button aria-label="Translucency"><svg><use href="#cube"/></svg></button><button class="drop" aria-label="Translucency menu"></button>
      </div>
      <div class="group"><i class="grip"></i>
        <button aria-label="Intersect"><svg><use href="#venn"/></svg></button><button aria-label="Remove"><svg><use href="#venn2"/></svg></button><button aria-label="Either"><svg><use href="#ball"/></svg></button><button aria-label="Replace"><svg><use href="#replace"/></svg></button><button aria-label="Undo"><svg><use href="#undo"/></svg></button><button aria-label="Redo"><svg><use href="#redo"/></svg></button><button aria-label="Display group"><svg><use href="#parts"/></svg></button><button aria-label="Manager"><svg><use href="#dialog"/></svg></button>
      </div>
      <div class="group"><i class="grip"></i>
        <button aria-label="Wireframe"><svg><use href="#wire"/></svg></button><button aria-label="Hidden"><svg><use href="#hidden"/></svg></button><button aria-label="Filled"><svg><use href="#yellowcube"/></svg></button><button aria-label="Shaded"><svg><use href="#goldcube"/></svg></button>
      </div>
    </div>
  </div>

  <main class="work">
    <aside class="side">
      <div class="tabs" role="tablist"><button role="tab" aria-selected="false">Model</button><button role="tab" aria-selected="true">Results</button></div>
      <div class="panel">
        <div class="panelbar">
          <span class="combo w-tree"><select aria-label="Tree contents"><option>Session Data</option></select></span>
          <button aria-label="Change order"><svg><use href="#sorter"/></svg></button><button aria-label="Up one level"><svg><use href="#upfolder"/></svg></button><button aria-label="Set root"><svg><use href="#treei"/></svg></button><button aria-label="Tips"><svg><use href="#bulb"/></svg></button>
        </div>
        <ul class="tree">
          <li class="more"><svg><use href="#stackdb"/></svg>Output Databases (2)</li>
          <li class="more"><svg><use href="#stackmdb"/></svg>Model Database (1)</li>
          <li class="more"><svg><use href="#spectrum"/></svg>Spectrums (7)</li>
          <li><svg><use href="#xyplot"/></svg>XYPlots</li>
          <li><svg><use href="#xydata"/></svg>XYData</li>
          <li><svg><use href="#pathi"/></svg>Paths</li>
          <li class="more"><svg><use href="#groups"/></svg>Display Groups (1)</li>
          <li><svg><use href="#fbc"/></svg>Free Body Cuts</li>
          <li><svg><use href="#streams"/></svg>Streams</li>
          <li><svg><use href="#movie"/></svg>Movies</li>
          <li><svg><use href="#image"/></svg>Images</li>
        </ul>
      </div>
    </aside>

    <section class="stage">
      <div class="context">
        <label for="module">Module:</label>
        <span class="combo spin w-mod"><select id="module"><option>Visualization</option></select></span>
        <label for="odb">ODB:</label>
        <span class="combo spin w-odb"><select id="odb"><option>C:/Temp/opbridge.odb</option></select></span>
        <div class="play"><button aria-label="First"><svg><use href="#first"/></svg></button><button aria-label="Previous"><svg><use href="#prev"/></svg></button><button aria-label="Next"><svg><use href="#next"/></svg></button><button aria-label="Last"><svg><use href="#last"/></svg></button></div>
        <div class="snap"><button aria-label="Frame selector"><svg><use href="#frames"/></svg></button><button aria-label="Save view"><svg><use href="#cameraaxis"/></svg></button><button aria-label="Snapshot"><svg><use href="#camera"/></svg></button></div>
      </div>
      <div class="canvasrow">
        <div class="toolbox">
          <div class="tools"><button aria-label="Common options"><svg><use href="#num"/></svg></button><button aria-label="Superimpose options"><svg><use href="#num2"/></svg></button><button aria-label="Symbols"><svg><use href="#ident"/></svg></button><button aria-label="ODB display"><svg><use href="#dbopt"/></svg></button></div>
          <div class="tools">
            <button class="on" aria-label="Plot undeformed"><svg><use href="#lshape"/></svg></button><button aria-label="Plot deformed"><svg><use href="#ldef"/></svg></button>
            <button class="on held" aria-label="Plot contours"><svg><use href="#hotl"/></svg><svg class="pointer" viewBox="0 0 14 20"><path d="M1.500 1.500v14l3.500-3 3 6 3-1.500-3-5.500H12z" fill="#fff" stroke="#333"/></svg></button><button aria-label="Contour options"><svg><use href="#contopt"/></svg></button>
            <button aria-label="Plot symbols"><svg><use href="#lsym"/></svg></button><button class="held" aria-label="Symbol options"><svg><use href="#symopt"/></svg><svg class="mouse" viewBox="0 0 22 30"><path d="M1 12Q1 1 11 1t10 11v7q0 10-10 10T1 19z" fill="#dfe2e8" stroke="#8d939d"/><path d="M1.500 13Q1 1 11 1.500V13z" fill="#8dbbe4" stroke="#7295b8"/><path d="M1 13h20M11 1v12" stroke="#8d939d"/><rect x="9.500" y="5" width="3" height="6" rx="1" fill="#b9c6d6" stroke="#70839a"/></svg></button>
            <button aria-label="Plot material orientation"><svg><use href="#lmat"/></svg></button><button aria-label="Material options"><svg><use href="#matopt"/></svg></button>
            <button aria-label="Multiple plot states"><svg><use href="#super"/></svg></button><button aria-label="Plot state options"><svg><use href="#superopt"/></svg></button>
          </div>
          <div class="tools"><button aria-label="Animate scale"><svg><use href="#anim1"/></svg></button><button aria-label="Animate time"><svg><use href="#anim2"/></svg></button><button aria-label="Animate harmonic"><svg><use href="#anim3"/></svg></button><button aria-label="Animation options"><svg><use href="#listopt"/></svg></button></div>
          <div class="tools"><button aria-label="Create system"><svg><use href="#csys"/></svg></button><button aria-label="System manager"><svg><use href="#dialog"/></svg></button></div>
          <div class="tools"><button aria-label="Create XY data"><svg><use href="#xytable"/></svg></button><button aria-label="XY manager"><svg><use href="#dialog"/></svg></button><button aria-label="Create path"><svg><use href="#pathpt"/></svg></button><button aria-label="XY options"><svg><use href="#xyline"/></svg></button></div>
          <div class="tools"><button aria-label="Create field"><svg><use href="#waves"/></svg></button><button aria-label="Create fields from frames"><svg><use href="#waves2"/></svg></button></div>
          <div class="tools"><button aria-label="View cut"><svg><use href="#viewcut"/></svg></button><button aria-label="View cut manager"><svg><use href="#dialog"/></svg></button></div>
          <div class="tools"><button aria-label="Free body cut"><svg><use href="#fbc2"/></svg></button><button aria-label="Free body manager"><svg><use href="#dialog"/></svg></button></div>
          <div class="tools"><button aria-label="Create stream"><svg><use href="#stream2"/></svg></button><button aria-label="Stream manager"><svg><use href="#dialog"/></svg></button></div>
          <div class="tools"><button aria-label="Overlay"><svg><use href="#swap"/></svg></button><button aria-label="Overlay manager"><svg><use href="#dialog"/></svg></button></div>
        </div>
        <div class="viewport">
          <svg class="scene" viewBox="261 127 1019 500" preserveAspectRatio="xMidYMid slice" role="img" aria-label="Bridge model">
            <g class="bridge" transform="translate(430 260) scale(.33333)">
              <!-- far arch -->
              <path class="f" d="M35 672L93 600L180 502L250 430L330 352L425 270Q540 190 700 120Q800 80 900 55Q1000 35 1090 29Q1210 22 1330 38Q1420 56 1500 90Q1650 152 1800 236L1760 228Q1650 172 1530 137Q1440 95 1330 72Q1200 52 1090 60Q970 70 880 97Q790 120 700 165Q610 205 540 245Q450 290 395 335Q320 395 250 462L135 595L100 640L60 706Z"/>
              <path class="e" d="M42 678L100 604L185 508L255 437L335 360L428 280Q543 199 702 129Q802 89 902 64Q1000 45 1090 38Q1210 31 1330 46Q1440 70 1640 160"/>
              <!-- deck -->
              <path class="d" d="M93 603L1715 237L1960 350L130 780L108 738Z"/>
              <path class="f" d="M93 603L150 580L135 597Z"/>
              <!-- far struts -->
              <path class="f" d="M248 460L268 445L325 512L302 525Z"/>
              <path class="f" d="M403 322L427 308L365 478L340 482Z"/><path class="b" d="M403 322L412 318L352 478L342 480Z"/>
              <path class="f" d="M330 548L345 552L352 540L345 530Z"/>
              <path class="f" d="M505 400L530 388L612 465L628 485L608 490L590 478Z"/>
              <path class="f" d="M603 460L650 310L685 300L628 485L610 488Z"/><path class="b" d="M600 462L645 315L662 306L612 465Z"/>
              <path class="f" d="M700 160L720 152L690 232L668 234Z"/><path class="b" d="M690 170L700 160L680 225L668 230Z"/>
              <path class="f" d="M890 98L925 105L985 405L945 412L905 200Z"/><path class="e" d="M905 110L953 410"/>
              <path class="f" d="M975 400L1080 170L1050 170L1000 310ZM975 400L1000 400L1080 180Z"/><path class="b" d="M975 398L1055 175L1066 175L985 400Z"/>
              <path class="f" d="M1165 160L1195 155L1320 310L1315 335L1292 332Z"/><path class="e" d="M1178 160L1303 315"/>
              <path class="f" d="M1298 315L1350 155L1385 155L1320 325L1305 330Z"/><path class="b" d="M1295 312L1347 158L1360 158L1307 318Z"/>
              <path class="f" d="M1445 158L1475 158L1558 255L1575 272L1550 278Z"/>
              <path class="f" d="M1555 252L1580 195L1603 200L1575 272L1560 272Z"/><path class="b" d="M1555 248L1580 192L1588 196L1565 256Z"/>
              <!-- wind bracing -->
              <path class="f" d="M515 350L597 240L695 130L705 140L605 262L545 335Z"/>
              <path class="l" d="M428 275L590 242L582 264L445 290ZM605 240L765 220L690 242L600 264Z"/>
              <path class="b" d="M420 275L440 275L497 360L470 374Z"/><path class="e" d="M432 278L484 366"/>
              <path class="f" d="M798 205L835 145L895 78L907 88L855 148L828 192Z"/>
              <path class="l" d="M712 122L842 143L832 155L725 140ZM855 145L945 155L920 168L850 160Z"/>
              <path class="b" d="M700 125L718 125L797 203L770 214Z"/><path class="e" d="M710 128L784 207"/>
              <path class="f" d="M1008 148L1060 88L1102 45L1112 55L1062 104L1035 138Z"/>
              <path class="l" d="M910 70L1055 95L1045 108L925 88ZM1070 98L1185 118L1140 126L1065 112Z"/>
              <path class="b" d="M898 73L922 76L1000 145L970 152Z"/><path class="e" d="M910 75L986 148"/>
              <path class="f" d="M1080 85L1100 78L1115 118L1085 120Z"/>
              <path class="f" d="M1225 118L1316 94L1402 64L1400 84L1330 108L1270 120Z"/>
              <path class="l" d="M1128 44L1316 93L1310 105L1150 70ZM1325 97L1430 118L1370 120L1322 110Z"/>
              <path class="b" d="M1100 40L1125 42L1225 113L1185 118Z"/><path class="e" d="M1112 42L1205 116"/>
              <path class="f" d="M1370 92L1400 86L1430 116L1390 114Z"/>
              <path class="b" d="M1393 65L1418 64L1535 138L1490 132Z"/><path class="e" d="M1405 66L1514 135"/>
              <!-- near struts -->
              <path class="b" d="M370 668L385 672L470 425L452 430Z"/><path class="f" d="M375 700L400 690L487 415L462 430Z"/>
              <path class="f" d="M285 600L303 575L380 668L385 700L368 700Z"/><path class="e" d="M296 590L376 680"/>
              <path class="b" d="M675 600L690 602L788 248L770 252Z"/><path class="f" d="M685 625L705 620L806 240L780 252Z"/>
              <path class="f" d="M465 425L492 408L682 600L692 630L670 632Z"/><path class="e" d="M490 418L684 606"/>
              <path class="b" d="M988 185L1003 182L1058 545L1042 530Z"/><path class="f" d="M998 182L1032 176L1090 535L1055 550Z"/>
              <path class="f" d="M790 252L812 238L1045 525L1052 550L1030 548Z"/><path class="e" d="M806 248L1040 532"/>
              <path class="b" d="M1085 520L1102 524L1218 155L1200 158Z"/><path class="f" d="M1095 535L1112 525L1240 152L1210 155Z"/>
              <path class="f" d="M1220 157L1250 150L1452 435L1456 455L1425 460Z"/><path class="e" d="M1235 160L1440 445"/>
              <path class="b" d="M1430 425L1448 430L1540 175L1520 175Z"/><path class="f" d="M1440 452L1458 448L1570 183L1535 175Z"/>
              <path class="f" d="M1550 198L1572 184L1732 370L1740 390L1710 395Z"/><path class="e" d="M1560 196L1722 382"/>
              <path class="b" d="M1712 362L1728 368L1765 253L1745 250Z"/><path class="f" d="M1722 388L1740 385L1785 268L1757 255Z"/>
              <!-- near arch and bottom chord -->
              <path class="f" d="M165 741L1915 343L1965 364L130 782L120 760Z"/>
              <path class="f" d="M48 832L62 808L105 740L190 640L270 550L350 470L470 375Q600 295 720 237Q850 180 950 158Q1050 136 1090 130Q1200 116 1330 122Q1450 130 1530 145Q1650 172 1750 213Q1820 243 1900 285L1965 325L2040 388L2045 408L2025 412L1955 365L1915 343L1785 270L1760 256Q1670 212 1570 186L1535 177Q1380 148 1230 153L1210 155Q1120 162 1030 180Q900 208 810 241L790 253Q630 330 490 412L460 435Q370 505 300 577L288 598L165 741L130 782L80 858L55 860Z"/>
              <path class="e" d="M60 834L113 750L198 650L278 560L358 480L478 385Q606 305 726 247Q854 190 954 167Q1050 146 1090 140Q1200 126 1330 129Q1450 137 1560 160"/>
              <path class="g" d="M167 740L1913 343"/>
              <circle class="f" cx="46" cy="693" r="14"/><circle class="e" cx="46" cy="693" r="7"/>
              <circle class="f" cx="62" cy="853" r="14"/><circle class="e" cx="62" cy="853" r="7"/>
              <circle class="f" cx="2031" cy="399" r="12"/><circle class="e" cx="2031" cy="399" r="6"/>
            </g>
            <!-- model triad -->
            <path d="M344 581l-4-20" stroke="#10d010" stroke-width="4"/><path d="M335 564l4-11 7 9z" fill="#20e020"/>
            <path d="M344 582l20-5" stroke="#c01414" stroke-width="4"/><path d="M361 572l11 4-9 7z" fill="#c01414"/>
            <circle cx="347" cy="586" r="4" fill="#0808c0"/>
            <g class="axes"><text x="332" y="546">Y</text><text x="376" y="576">X</text><text x="348" y="593">Z</text></g>
            <g class="notes"><text x="396" y="539">ODB: opbridge.odb</text><text x="465" y="539">Abaqus/Standard 6.12-3</text><text x="550" y="539">Sat Nov 08 23:10:37 Pacific Standard Time 2014</text><text x="396" y="573">Step: Step-1</text><text x="396" y="579">Increment</text><text x="442" y="579">1: Step Time =</text><text x="498" y="579">1.000</text></g>
            <!-- view compass -->
            <path d="M1203 153q22-2 27 19l-20 4z" fill="#126a72" stroke="#e4dff8" stroke-width="2"/>
            <path d="M1201 149l7 42" stroke="#e4dff8" stroke-width="2"/><path d="M1202 151l8 31-3 1z" fill="#10106a" stroke="#e4dff8"/><circle cx="1200" cy="147" r="3" fill="#e4dff8"/>
            <path d="M1193 197l13-4 15-1 7 3-8 7-20 1z" fill="#126a72" stroke="#e4dff8"/><path d="M1206 194h7v7h-7z" fill="#f00c0c"/>
            <g class="compass"><text x="1196" y="141">Y</text><text x="1234" y="173">X</text><text x="1209" y="187">Z</text></g>
          </svg>
        </div>
      </div>
      <div class="prompt">
        <svg class="ds" viewBox="0 0 22 22"><g fill="none" stroke="#3f4549" stroke-width="1.500"><path d="M8 2q7-2 5 2-2 3-6 4"/><path d="M5 9q7-1 4 5-3 5-8 5l4-7"/><path d="M19 8q-6-1-6 2 5 3 4 6-2 3-7 3" stroke-width="2"/></g></svg>
        <span>SIMULIA</span>
      </div>
    </section>
  </main>

  <footer class="console">
    <div class="ctabs">
      <button class="cur" aria-label="Message area"><svg viewBox="0 0 24 24"><path d="M5.500 3.500h15v17h-15z" fill="#e6e8dc" stroke="#444"/><path d="M5 17l6-5 2 3-8 7-2-1z" fill="#d9b960" stroke="#4c3d14"/></svg></button>
      <button aria-label="Command line interface"><svg viewBox="0 0 24 24"><path d="M1.500 1.500h21v22h-21z" fill="#f3e96a" stroke="#333" stroke-width="1.500"/><path d="M5 8l3 4-3 4M10 8l3 4-3 4M15 8l3 4-3 4" stroke="#222" fill="none" stroke-width="2"/></svg></button>
    </div>
    <div class="log">
      <pre>Job Opt-Process-1-Job: Calculator completed successfully.
Job Opt-Process-1-Job completed successfully.
Optimization process Opt-Process-1 completed successfully.
Application restarted after 60 minutes of idle time; the license will be checked within the next 3 minutes.</pre>
      <div class="scroll"><i class="up"></i><i class="thumb"></i><i class="down"></i></div>
    </div>
    <svg class="size" viewBox="0 0 14 14"><path d="M10 2h2M6 6h2M10 6h2M2 10h2M6 10h2M10 10h2" stroke="#9a9a9a" stroke-width="2"/></svg>
  </footer>
</div>
</body>
</html>
```

FILE: styles.css
```css
* { box-sizing: border-box; }

body {
  margin: 0;
  font-family: "Noto Sans", "Open Sans", sans-serif;
  font-size: 11px;
  line-height: 16px;
  color: #1b1b1b;
  background: #f0f0f0;
}

button {
  margin: 0;
  padding: 0;
  border: 0;
  background: none;
  font: inherit;
  color: inherit;
}

svg { display: block; }
.sprite { position: absolute; width: 0; height: 0; }

.app {
  display: flex;
  flex-direction: column;
  height: 100vh;
  overflow: hidden;
  border-bottom: 2px solid #5a76a8;
}

/* title bar */
.titlebar {
  display: flex;
  align-items: flex-start;
  height: 21px;
  flex: none;
  padding: 0 3px 0 0;
  border-bottom: 1px solid #4d5d6c;
  background:
    linear-gradient(90deg, rgba(226,234,242,.75) 0, rgba(205,219,232,.7) 160px, rgba(160,184,205,0) 220px),
    linear-gradient(180deg, rgba(40,60,80,.35), rgba(90,120,150,0) 60%),
    linear-gradient(90deg, #8ba9c3 0, #557d9e 20%, #6689a5 35%, #5b7f9f 50%, #7398b8 64%, #86abd2 80%, #8ab0d8 88%, #b0c4d8 100%);
}
.titlebar h1 {
  flex: 1;
  margin: 2px 0 0;
  font-size: 11px;
  font-weight: normal;
  line-height: 16px;
}
.appicon { width: 16px; height: 16px; margin: 2px 3px 0 0; }
.wincontrols {
  display: flex;
  height: 17px;
  border: 1px solid #4c5c6e;
  border-top: 0;
  border-radius: 0 0 4px 4px;
  overflow: hidden;
}
.wincontrols button {
  display: flex;
  width: 25px;
  justify-content: center;
  border-right: 1px solid #6e7f92;
  background: linear-gradient(#d3dbe4, #a5b3c3 50%, #8b9db1 50%, #b0bfce);
}
.wincontrols .close {
  width: 44px;
  border: 0;
  background: linear-gradient(#dba093, #cc5a48 50%, #b8281a 50%, #d0553c);
}
.wincontrols svg { width: 24px; height: 16px; }

/* menu bar */
.menubar {
  display: flex;
  align-items: center;
  flex: none;
  gap: 14px;
  height: 23px;
  padding: 0 4px;
  border-bottom: 1px solid #b4b4b4;
  background: linear-gradient(90deg, #fff, #f6f6f6 60%, #f2f2f2);
}
.docicon { width: 14px; height: 14px; margin-right: -4px; }
.helpicon { width: 14px; height: 14px; }
.mdi { display: flex; gap: 5px; margin-left: auto; }
.mdi button { width: 14px; height: 12px; border: 1px solid #a5b6ca; background: #e5edf6; }
.mdi svg { width: 12px; height: 10px; }

/* toolbars */
.toolbars { flex: none; background: #f1f1f1; }
.row { display: flex; height: 26px; padding-left: 7px; }
.row.second { padding-left: 88px; }
.group {
  display: flex;
  align-items: center;
  border-right: 1px solid #c6c6c6;
  border-bottom: 1px solid #c6c6c6;
  background: linear-gradient(#fff, #f3f3f3);
}
.group.apart { margin-left: 140px; }
.group svg { width: 22px; height: 22px; margin: auto; }
.group button { width: 24px; height: 25px; flex: none; }
.group.spaced { gap: 2px; }
.spaced .grip { margin-right: -2px; }
.second .group { padding-right: 1px; }
.grip {
  width: 8px;
  height: 15px;
  flex: none;
  background: radial-gradient(circle, #a0a0a0 1px, transparent 1px) 0 0 / 6px 4px repeat-y;
}
.bar { width: 1px; height: 16px; margin: 0 1px 0 0; background: #bbb; }
.on {
  border: 1px solid #6f7378;
  border-radius: 3px;
  background: linear-gradient(#d5d7da, #eceef0);
}
.group .drop { width: 12px; }
.drop::after {
  content: "";
  display: block;
  width: 0;
  margin: auto;
  border: 4px solid transparent;
  border-top-color: #111;
  border-bottom: 0;
}

/* drop-downs */
.combo { position: relative; display: flex; height: 23px; flex: none; }
.combo select {
  width: 100%;
  padding: 0 12px 0 1px;
  border: 1px solid #a9acb0;
  border-radius: 0;
  appearance: none;
  background: #fff;
  font: inherit;
  color: inherit;
}
.combo::before {
  content: "";
  position: absolute;
  top: 1px;
  right: 1px;
  bottom: 1px;
  width: 10px;
  border: 1px solid #8d9094;
  background: linear-gradient(#f4f4f4, #dcdcdc);
  pointer-events: none;
}
.combo::after {
  content: "";
  position: absolute;
  top: 10px;
  right: 3px;
  border: 3px solid transparent;
  border-top: 4px solid #111;
  border-bottom: 0;
  pointer-events: none;
}
.w-s { width: 71px; }
.w-m { width: 76px; }
.w-l { width: 98px; margin-left: 1px; }
.w-xl { width: 125px; margin: 0 1px; }
.w-tree { width: 102px; }
.w-mod { width: 98px; }
.w-odb { width: 348px; }
.combo.spin select {
  padding-left: 9px;
  background:
    linear-gradient(#7d8fc0, #7d8fc0) 3px 5px / 3px 3px no-repeat,
    linear-gradient(#7d8fc0, #7d8fc0) 3px 13px / 3px 3px no-repeat,
    linear-gradient(#b9bcc4, #b9bcc4) 0 10px / 9px 1px no-repeat,
    linear-gradient(90deg, #eef0f6 9px, #fff 9px);
  border-color: #8d9094;
}

/* work area */
.work { display: flex; flex: 1; min-height: 0; background: #fff; }

.side { display: flex; flex-direction: column; width: 198px; flex: none; padding: 6px 1px 0 2px; }
.tabs { display: flex; align-items: flex-end; height: 22px; padding-left: 2px; }
.tabs button {
  height: 20px;
  width: 46px;
  border: 1px solid #9c9c9c;
  border-bottom: 0;
  background: linear-gradient(#f1f1f1, #dadada);
}
.tabs button[aria-selected="true"] { width: 51px; height: 23px; margin-bottom: -1px; background: #fff; z-index: 1; }
.panel {
  display: flex;
  flex-direction: column;
  flex: 1;
  margin-bottom: 5px;
  border: 1px solid #a2a2a2;
}
.panelbar { display: flex; align-items: center; gap: 7px; padding: 5px 1px 3px 2px; }
.panelbar .combo { margin-right: -4px; }
.panelbar svg { width: 16px; height: 16px; }
.tree {
  flex: 1;
  margin: 0 0 0 2px;
  padding: 0;
  list-style: none;
  border-top: 1px solid #bdbdbd;
  border-left: 1px solid #bdbdbd;
}
.tree li {
  position: relative;
  display: flex;
  align-items: center;
  gap: 4px;
  height: 18px;
  padding-left: 13px;
}
.tree li svg { width: 16px; height: 16px; flex: none; }
.tree li::before {
  content: "";
  position: absolute;
  left: 5px;
  top: 0;
  width: 8px;
  height: 100%;
  border-left: 1px dotted #b5b5b5;
  background: repeating-linear-gradient(90deg, #b5b5b5 0 1px, transparent 1px 2px) 0 9px / 6px 1px no-repeat;
}
.tree li:last-child::before { height: 10px; }
.tree .more::after {
  content: "";
  position: absolute;
  left: 1px;
  top: 5px;
  width: 9px;
  height: 9px;
  border: 1px solid #9a9a9a;
  background:
    linear-gradient(#333, #333) 1px 3px / 5px 1px no-repeat,
    linear-gradient(#333, #333) 3px 1px / 1px 5px no-repeat,
    #fff;
}

.stage { display: flex; flex-direction: column; flex: 1; min-width: 0; padding-left: 5px; }
.context {
  display: flex;
  align-items: center;
  flex: none;
  height: 31px;
  padding: 0 29px 1px 7px;
  background: linear-gradient(#fff, #f1f1f1);
}
.context .combo { height: 22px; margin: 0 13px 0 5px; }
.play, .snap { display: flex; align-items: center; height: 24px; }
.play { gap: 4px; margin-left: auto; padding-right: 7px; border-right: 1px solid #a5a5a5; }
.snap { gap: 4px; padding-left: 8px; }
.context svg { width: 24px; height: 24px; }

.canvasrow { display: flex; flex: 1; min-height: 0; }
.toolbox {
  width: 58px;
  flex: none;
  padding: 1px 3px 0 1px;
  overflow: hidden;
  background: #f4f4f4;
}
.tools {
  display: grid;
  grid-template-columns: 26px 26px;
  grid-auto-rows: 26px;
  padding: 4px 1px 2px;
  border-top: 1px solid #bdbdbd;
}
.tools button { display: flex; align-items: center; justify-content: center; padding: 0; }
.tools svg { width: 22px; height: 22px; flex: none; }
.tools .on { margin: 1px; background: #d9d9d9; }
.tools .held { position: relative; }
.tools .on.held { background: #aaa4a4; }
.tools .pointer { position: absolute; z-index: 2; left: 11px; top: 10px; width: 13px; height: 18px; }
.tools .mouse { position: absolute; z-index: 1; left: 1px; top: 3px; width: 22px; height: 30px; opacity: .9; }

.viewport {
  flex: 1;
  min-width: 0;
  background: linear-gradient(#1b2d47 0, #26364f 27%, #2f3c5a 52%, #3c4865 65%, #6a7794 82%, #a0afc9 100%);
}
.scene { width: 100%; height: 100%; }
.bridge path, .bridge circle { stroke: #043c04; stroke-width: 3; stroke-linejoin: round; }
.bridge .f { fill: #00b000; }
.bridge .b { fill: #00d200; }
.bridge .l { fill: #1cf01c; }
.bridge .d { fill: #00e400; }
.bridge .e { fill: none; }
.bridge .g { fill: none; stroke: #0b7a0b; }
.axes { font: bold 9px "Liberation Sans", sans-serif; fill: #fff; }
.notes { font: 7px "Liberation Sans", sans-serif; fill: #fff; }
.compass { font: bold 7px "Liberation Sans", sans-serif; fill: #d6d62e; }

.prompt {
  display: flex;
  align-items: center;
  justify-content: flex-end;
  gap: 4px;
  flex: none;
  height: 34px;
  padding: 4px 2px 0;
  background: linear-gradient(#fdfdfd, #ebebeb);
}
.prompt span { font: italic bold 14px "DejaVu Sans", sans-serif; color: #555c61; }
.ds { width: 22px; height: 22px; }

/* message area */
.console { display: flex; flex: none; height: 57px; padding-left: 2px; background: #f0f0f0; }
.ctabs { display: flex; flex-direction: column; width: 36px; background: #fff; }
.ctabs button { height: 37px; flex: none; padding: 0 5px 4px; border: 1px solid #a8a8a8; background: #d4d4d4; }
.ctabs .cur { padding-top: 4px; border-right: 0; background: #fff; }
.ctabs svg { width: 24px; height: 24px; }
.log { display: flex; flex: 1; border: 1px solid #8d8d8d; background: #fff; }
.log pre {
  flex: 1;
  margin: 0;
  padding: 5px 4px 0;
  font: 12px/12px "Liberation Mono", monospace;
  color: #2a2a2a;
}
.scroll {
  display: flex;
  flex-direction: column;
  align-items: center;
  width: 15px;
  padding: 7px 0 5px;
  background: #f0f0f0;
}
.scroll .up { border: 3px solid transparent; border-top: 0; border-bottom: 4px solid #333; }
.scroll .down { border: 3px solid transparent; border-bottom: 0; border-top: 4px solid #333; }
.scroll .thumb {
  width: 13px;
  height: 7px;
  margin: auto 0 9px;
  border: 1px solid #8f8f8f;
  background: repeating-linear-gradient(#666 0 1px, #e8e8e8 1px 2px);
}
.size { width: 14px; height: 14px; margin: auto 2px 0; }
```
